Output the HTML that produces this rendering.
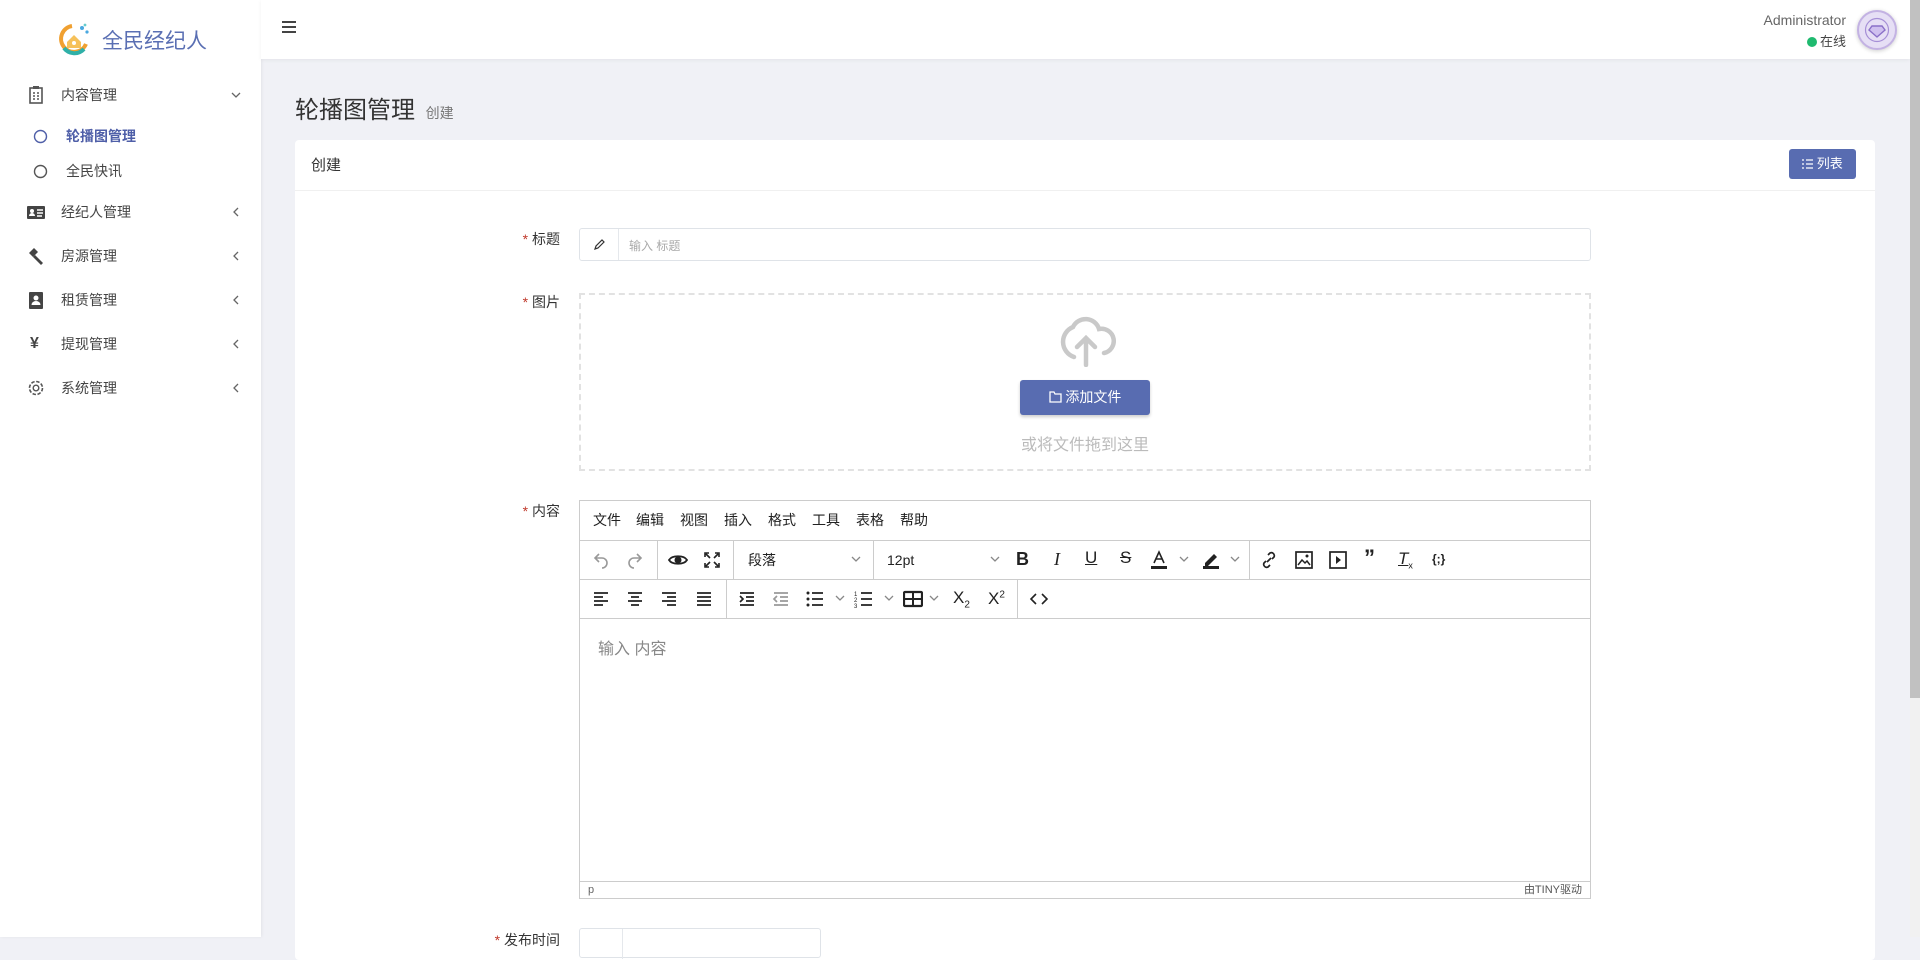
<!DOCTYPE html>
<html><head><meta charset="utf-8"><style>
*{box-sizing:border-box;margin:0;padding:0}
body{width:1920px;height:937px;overflow:hidden;position:relative;background:#f0f1f6;font-family:"Liberation Sans","Noto Sans CJK SC",sans-serif;color:#333}
.a{position:absolute}
.side{left:0;top:0;width:261px;height:937px;background:#fff;box-shadow:1px 0 3px rgba(0,0,0,.06)}
.mi{position:absolute;left:0;width:261px;height:30px;font-size:14px;color:#444;line-height:30px}
.mi .ic{position:absolute;left:26px;top:5px;width:20px;height:20px}
.mi .t{position:absolute;left:61px}
.mi .ch{position:absolute;left:229px;top:8px}
.hdr{left:261px;top:0;right:10px;height:59px;background:#fff;box-shadow:0 1px 4px rgba(0,0,0,.06)}
.card{left:295px;top:140px;width:1580px;height:820px;background:#fff;border-radius:4px}
.lbl{position:absolute;font-size:14px;color:#333;text-align:right;width:100px;left:460px}
.lbl b{color:#c0392b;font-weight:normal}
.tb{position:absolute;left:0;width:1010px;height:39px;border-top:1px solid #ccc}
.ti{position:absolute;top:9px;width:20px;height:20px;margin-left:-10px}
.sep{position:absolute;top:0;width:1px;height:38px;background:#ccc}
.mn{position:absolute;top:0;font-size:14px;line-height:39px;color:#222}
</style></head><body>
<div class="a side">
  <svg class="a" style="left:58px;top:22px" width="32" height="34" viewBox="0 0 32 34"><path d="M14 4 A13 13 0 1 0 28 22" fill="none" stroke="#f0a030" stroke-width="4"/><path d="M6 26 A13 13 0 0 0 26 27" fill="none" stroke="#2fb0a8" stroke-width="4"/><path d="M9 20 L16 13 L23 20 L23 26 L9 26Z" fill="#f6c15a"/><circle cx="16" cy="21" r="2" fill="#fff"/><circle cx="24" cy="6" r="2" fill="#4aa8e0"/><circle cx="29" cy="10" r="1.6" fill="#4aa8e0"/><circle cx="27" cy="3" r="1.4" fill="#6cc"/></svg>
  <div class="a" style="left:102px;top:25px;font-size:21px;color:#5a6fb3">全民经纪人</div>
  <div class="mi" style="top:80px"><svg class="ic" viewBox="0 0 20 20"><rect x="4" y="3" width="12" height="15" fill="none" stroke="#555" stroke-width="1.6"/><rect x="7" y="1" width="6" height="3" fill="#555"/><path d="M7 8h2M11 8h2M7 11h2M11 11h2M7 14h2M11 14h2" stroke="#555" stroke-width="1.4"/></svg><span class="t">内容管理</span><svg class="ch" width="14" height="14" viewBox="0 0 14 14"><path d="M3 5l4 4 4-4" fill="none" stroke="#666" stroke-width="1.3"/></svg></div>
  <div class="mi" style="top:121px;color:#4f5fa8;font-weight:bold"><svg class="a" style="left:33px;top:8px" width="15" height="15"><circle cx="7.5" cy="7.5" r="6" fill="none" stroke="#4f5fa8" stroke-width="1.4"/></svg><span class="t" style="left:66px">轮播图管理</span></div>
  <div class="mi" style="top:156px"><svg class="a" style="left:33px;top:8px" width="15" height="15"><circle cx="7.5" cy="7.5" r="6" fill="none" stroke="#555" stroke-width="1.4"/></svg><span class="t" style="left:66px">全民快讯</span></div>
  <div class="mi" style="top:197px"><svg class="ic" viewBox="0 0 20 20"><rect x="1" y="4" width="18" height="13" rx="1" fill="#444"/><circle cx="6" cy="9" r="2" fill="#fff"/><path d="M3 14a3 3 0 0 1 6 0z" fill="#fff"/><path d="M11 8h6M11 11h6M11 14h5" stroke="#fff" stroke-width="1.4"/></svg><span class="t">经纪人管理</span><svg class="ch" width="14" height="14"><path d="M9 3L5 7l4 4" fill="none" stroke="#666" stroke-width="1.3"/></svg></div>
  <div class="mi" style="top:241px"><svg class="ic" viewBox="0 0 20 20"><path d="M3 7l5-5 4 4-5 5z" fill="#444"/><path d="M9 9l8 8-2 2-8-8z" fill="#444"/></svg><span class="t">房源管理</span><svg class="ch" width="14" height="14"><path d="M9 3L5 7l4 4" fill="none" stroke="#666" stroke-width="1.3"/></svg></div>
  <div class="mi" style="top:285px"><svg class="ic" viewBox="0 0 20 20"><rect x="3" y="2" width="14" height="17" rx="1" fill="#444"/><circle cx="10" cy="8" r="2.5" fill="#fff"/><path d="M5.5 15a4.5 4 0 0 1 9 0z" fill="#fff"/></svg><span class="t">租赁管理</span><svg class="ch" width="14" height="14"><path d="M9 3L5 7l4 4" fill="none" stroke="#666" stroke-width="1.3"/></svg></div>
  <div class="mi" style="top:329px"><span class="a" style="left:30px;font-size:16px;color:#444;font-weight:bold">¥</span><span class="t">提现管理</span><svg class="ch" width="14" height="14"><path d="M9 3L5 7l4 4" fill="none" stroke="#666" stroke-width="1.3"/></svg></div>
  <div class="mi" style="top:373px"><svg class="ic" viewBox="0 0 20 20"><circle cx="10" cy="10" r="6.5" fill="none" stroke="#555" stroke-width="1.6" stroke-dasharray="3.5 1.6"/><circle cx="10" cy="10" r="2.8" fill="none" stroke="#555" stroke-width="1.4"/></svg><span class="t">系统管理</span><svg class="ch" width="14" height="14"><path d="M9 3L5 7l4 4" fill="none" stroke="#666" stroke-width="1.3"/></svg></div>
</div>
<div class="a hdr">
  <svg class="a" style="left:20px;top:20px" width="16" height="14"><path d="M1 2h14M1 7h14M1 12h14" stroke="#444" stroke-width="2"/></svg>
  <div class="a" style="right:64px;top:12px;font-size:14px;color:#666">Administrator</div>
  <div class="a" style="right:64px;top:31px;font-size:13px;color:#444"><span style="display:inline-block;width:10px;height:10px;border-radius:50%;background:#1fba6f;margin-right:3px;vertical-align:-1px"></span>在线</div>
  <div class="a" style="right:13px;top:10px;width:40px;height:40px;border-radius:50%;background:#e6dff5;border:2px solid #c3b2e3;box-shadow:0 1px 4px rgba(0,0,0,.2)"><svg class="a" style="left:5px;top:5px" width="26" height="26" viewBox="0 0 26 26"><circle cx="13" cy="13" r="11.5" fill="none" stroke="#a58fd6" stroke-width="1.2"/><path d="M8 9h10l3 4-8 7-8-7z" fill="#cfc0ef" stroke="#8a70c8" stroke-width="1.4"/></svg></div>
</div>
<div class="a" style="left:1910px;top:0;width:10px;height:937px;background:#f1f1f1"><div style="width:10px;height:698px;background:#c1c1c1"></div></div>
<div class="a" style="left:295px;top:90px;font-size:24px;color:#333">轮播图管理 <span style="font-size:14px;color:#777;margin-left:4px">创建</span></div>
<div class="a card">
  <div class="a" style="left:16px;top:14px;font-size:15px;color:#333">创建</div>
  <div class="a" style="left:0;top:50px;width:1580px;height:1px;background:#f0f0f0"></div>
  <div class="a" style="left:1494px;top:9px;width:67px;height:30px;background:#586cb1;border-radius:3px;color:#fff;font-size:13px;line-height:30px;text-align:center"><svg width="11" height="10" style="vertical-align:-1px"><path d="M0 1h2M4 1h7M0 5h2M4 5h7M0 9h2M4 9h7" stroke="#fff" stroke-width="1.3"/></svg> 列表</div>
</div>
<div class="lbl" style="top:229px"><b>*</b> 标题</div>
<div class="a" style="left:579px;top:228px;width:1012px;height:33px;border:1px solid #dfe3e8;border-radius:3px;background:#fff">
  <div class="a" style="left:0;top:0;width:39px;height:31px;border-right:1px solid #e5e8ec"></div>
  <svg class="a" style="left:13px;top:9px" width="13" height="13"><path d="M2 11l1-3 6-6 2 2-6 6z" fill="none" stroke="#333" stroke-width="1.2"/></svg>
  <div class="a" style="left:49px;top:8px;font-size:12px;color:#aaa">输入 标题</div>
</div>
<div class="lbl" style="top:292px"><b>*</b> 图片</div>
<div class="a" style="left:579px;top:293px;width:1012px;height:178px;border:2px dashed #e2e2e2;background:#fff">
  <svg class="a" style="left:475px;top:18px" width="60" height="54" viewBox="0 0 60 54"><path d="M18 44 A16 16 0 0 1 17 14 A14 14 0 0 1 43 16 A12 12 0 0 1 48 40" fill="none" stroke="#c9c9c9" stroke-width="4.5" stroke-linecap="round"/><path d="M30 52V26M21 34l9-9 9 9" fill="none" stroke="#c9c9c9" stroke-width="4.5" stroke-linecap="round"/></svg>
  <div class="a" style="left:439px;top:85px;width:130px;height:35px;background:#586cb1;border-radius:3px;box-shadow:0 2px 3px rgba(0,0,0,.2);color:#fff;font-size:14px;line-height:35px;text-align:center"><svg width="13" height="12" style="vertical-align:-1px"><path d="M1 1h4l1 2h6v8H1z" fill="none" stroke="#fff" stroke-width="1.3"/></svg> 添加文件</div>
  <div class="a" style="left:0;width:1008px;top:136px;text-align:center;font-size:16px;color:#bbb">或将文件拖到这里</div>
</div>
<div class="lbl" style="top:501px"><b>*</b> 内容</div>
<div class="a" style="left:579px;top:500px;width:1012px;height:399px;border:1px solid #ccc;background:#fff">
  <div class="a" style="left:0;top:0;width:1010px;height:39px">
    <span class="mn" style="left:13px">文件</span><span class="mn" style="left:56px">编辑</span><span class="mn" style="left:100px">视图</span><span class="mn" style="left:144px">插入</span><span class="mn" style="left:188px">格式</span><span class="mn" style="left:232px">工具</span><span class="mn" style="left:276px">表格</span><span class="mn" style="left:320px">帮助</span>
  </div>
  <div class="tb" style="top:39px">
    <svg class="ti" style="left:21px" viewBox="0 0 20 20"><path d="M8 4L4 8l4 4M4 8h7a5 5 0 0 1 0 10" fill="none" stroke="#999" stroke-width="1.6"/></svg>
    <svg class="ti" style="left:55px" viewBox="0 0 20 20"><path d="M12 4l4 4-4 4M16 8H9a5 5 0 0 0 0 10" fill="none" stroke="#999" stroke-width="1.6"/></svg>
    <div class="sep" style="left:77px"></div>
    <svg class="ti" style="left:98px" viewBox="0 0 20 20"><path d="M1 10C4 5 16 5 19 10 16 15 4 15 1 10z" fill="none" stroke="#222" stroke-width="1.8"/><circle cx="10" cy="10" r="3.5" fill="#222"/></svg>
    <svg class="ti" style="left:132px" viewBox="0 0 20 20"><path d="M3 7V3h4M13 3h4v4M17 13v4h-4M7 17H3v-4M4 4l4 4M16 4l-4 4M16 16l-4-4M4 16l4-4" fill="none" stroke="#222" stroke-width="1.6"/></svg>
    <div class="sep" style="left:153px"></div>
    <span class="mn" style="left:168px;font-size:14px">段落</span>
    <svg class="a" style="left:270px;top:14px" width="12" height="10"><path d="M2 2l4 4 4-4" fill="none" stroke="#888" stroke-width="1.3"/></svg>
    <div class="sep" style="left:293px"></div>
    <span class="mn" style="left:307px;font-size:14px">12pt</span>
    <svg class="a" style="left:409px;top:14px" width="12" height="10"><path d="M2 2l4 4 4-4" fill="none" stroke="#888" stroke-width="1.3"/></svg>
    <span class="a" style="left:436px;top:8px;font-size:18px;font-weight:bold;color:#222">B</span>
    <span class="a" style="left:474px;top:8px;font-size:18px;font-style:italic;font-family:'Liberation Serif',serif;color:#222">I</span>
    <span class="a" style="left:505px;top:7px;font-size:17px;text-decoration:underline;color:#222">U</span>
    <span class="a" style="left:540px;top:7px;font-size:17px;text-decoration:line-through;color:#222">S</span>
    <svg class="ti" style="left:579px" viewBox="0 0 20 20"><path d="M5 13L10 2l5 11M7 9h6" fill="none" stroke="#222" stroke-width="1.6"/><rect x="2" y="16" width="16" height="3" fill="#222"/></svg>
    <svg class="a" style="left:598px;top:14px" width="12" height="10"><path d="M2 2l4 4 4-4" fill="none" stroke="#888" stroke-width="1.3"/></svg>
    <svg class="ti" style="left:631px" viewBox="0 0 20 20"><path d="M4 13l9-9 3 3-9 9H4z" fill="#222"/><rect x="2" y="16" width="16" height="3" fill="#222"/></svg>
    <svg class="a" style="left:649px;top:14px" width="12" height="10"><path d="M2 2l4 4 4-4" fill="none" stroke="#888" stroke-width="1.3"/></svg>
    <div class="sep" style="left:669px"></div>
    <svg class="ti" style="left:689px" viewBox="0 0 20 20"><path d="M8 12l4-4M9 5l2-2a3 3 0 0 1 4 4l-2 2M11 15l-2 2a3 3 0 0 1-4-4l2-2" fill="none" stroke="#222" stroke-width="1.7"/></svg>
    <svg class="ti" style="left:724px" viewBox="0 0 20 20"><rect x="2" y="2" width="16" height="16" fill="none" stroke="#222" stroke-width="1.7"/><path d="M4 15l4-5 3 3 2-2 3 4" fill="none" stroke="#222" stroke-width="1.5"/><circle cx="13" cy="6" r="1.5" fill="#222"/></svg>
    <svg class="ti" style="left:758px" viewBox="0 0 20 20"><rect x="2" y="2" width="16" height="16" fill="none" stroke="#222" stroke-width="1.7"/><path d="M8 6l5 4-5 4z" fill="#222"/></svg>
    <span class="a" style="left:784px;top:4px;font-size:22px;font-weight:bold;color:#222">”</span>
    <span class="a" style="left:818px;top:8px;font-size:17px;font-style:italic;text-decoration:underline;color:#222">T<sub style="font-size:9px;font-style:normal">x</sub></span>
    <span class="a" style="left:852px;top:11px;font-size:12px;font-weight:bold;color:#222">{;}</span>
  </div>
  <div class="tb" style="top:78px">
    <svg class="ti" style="left:21px" viewBox="0 0 20 20"><path d="M3 4h14M3 8h9M3 12h14M3 16h9" stroke="#222" stroke-width="1.8"/></svg>
    <svg class="ti" style="left:55px" viewBox="0 0 20 20"><path d="M3 4h14M6 8h8M3 12h14M6 16h8" stroke="#222" stroke-width="1.8"/></svg>
    <svg class="ti" style="left:89px" viewBox="0 0 20 20"><path d="M3 4h14M8 8h9M3 12h14M8 16h9" stroke="#222" stroke-width="1.8"/></svg>
    <svg class="ti" style="left:124px" viewBox="0 0 20 20"><path d="M3 4h14M3 8h14M3 12h14M3 16h14" stroke="#222" stroke-width="1.8"/></svg>
    <div class="sep" style="left:146px"></div>
    <svg class="ti" style="left:167px" viewBox="0 0 20 20"><path d="M3 4h14M9 8h8M9 12h8M3 16h14M3 7l3 3-3 3" fill="none" stroke="#222" stroke-width="1.7"/></svg>
    <svg class="ti" style="left:201px" viewBox="0 0 20 20"><path d="M3 4h14M9 8h8M9 12h8M3 16h14M6 7l-3 3 3 3" fill="none" stroke="#999" stroke-width="1.7"/></svg>
    <svg class="ti" style="left:235px" viewBox="0 0 20 20"><path d="M7 4h11M7 10h11M7 16h11" stroke="#222" stroke-width="1.7"/><circle cx="3" cy="4" r="1.5" fill="#222"/><circle cx="3" cy="10" r="1.5" fill="#222"/><circle cx="3" cy="16" r="1.5" fill="#222"/></svg>
    <svg class="a" style="left:254px;top:14px" width="12" height="10"><path d="M2 2l4 4 4-4" fill="none" stroke="#888" stroke-width="1.3"/></svg>
    <svg class="ti" style="left:284px" viewBox="0 0 20 20"><path d="M7 4h11M7 10h11M7 16h11" stroke="#222" stroke-width="1.7"/><text x="0" y="7" font-size="6" fill="#222">1</text><text x="0" y="13" font-size="6" fill="#222">2</text><text x="0" y="19" font-size="6" fill="#222">3</text></svg>
    <svg class="a" style="left:303px;top:14px" width="12" height="10"><path d="M2 2l4 4 4-4" fill="none" stroke="#888" stroke-width="1.3"/></svg>
    <svg class="ti" style="left:333px" viewBox="0 0 20 20"><rect x="1" y="3" width="18" height="14" rx="1" fill="none" stroke="#222" stroke-width="2.2"/><path d="M1 10h18M10 3v14" stroke="#222" stroke-width="2"/></svg>
    <svg class="a" style="left:348px;top:14px" width="12" height="10"><path d="M2 2l4 4 4-4" fill="none" stroke="#888" stroke-width="1.3"/></svg>
    <span class="a" style="left:373px;top:8px;font-size:17px;color:#222">X<sub style="font-size:10px">2</sub></span>
    <span class="a" style="left:408px;top:9px;font-size:17px;color:#222">X<sup style="font-size:10px">2</sup></span>
    <div class="sep" style="left:437px"></div>
    <svg class="ti" style="left:459px" viewBox="0 0 20 20"><path d="M7 5l-5 5 5 5M13 5l5 5-5 5" fill="none" stroke="#222" stroke-width="1.6"/></svg>
  </div>
  <div class="a" style="left:0;top:117px;width:1010px;height:1px;background:#ccc"></div>
  <div class="a" style="left:18px;top:134px;font-size:16px;color:#888">输入 内容</div>
  <div class="a" style="left:0;top:380px;width:1010px;height:17px;border-top:1px solid #ccc;font-size:11px;color:#666;line-height:16px">
    <span style="position:absolute;left:8px">p</span><span style="position:absolute;right:8px;color:#555">由TINY驱动</span>
  </div>
</div>
<div class="lbl" style="top:930px"><b>*</b> 发布时间</div>
<div class="a" style="left:579px;top:928px;width:242px;height:30px;border:1px solid #dfe3e8;border-radius:3px;background:#fff"><div class="a" style="left:42px;top:0;width:1px;height:30px;background:#e5e8ec"></div></div>
</body></html>
